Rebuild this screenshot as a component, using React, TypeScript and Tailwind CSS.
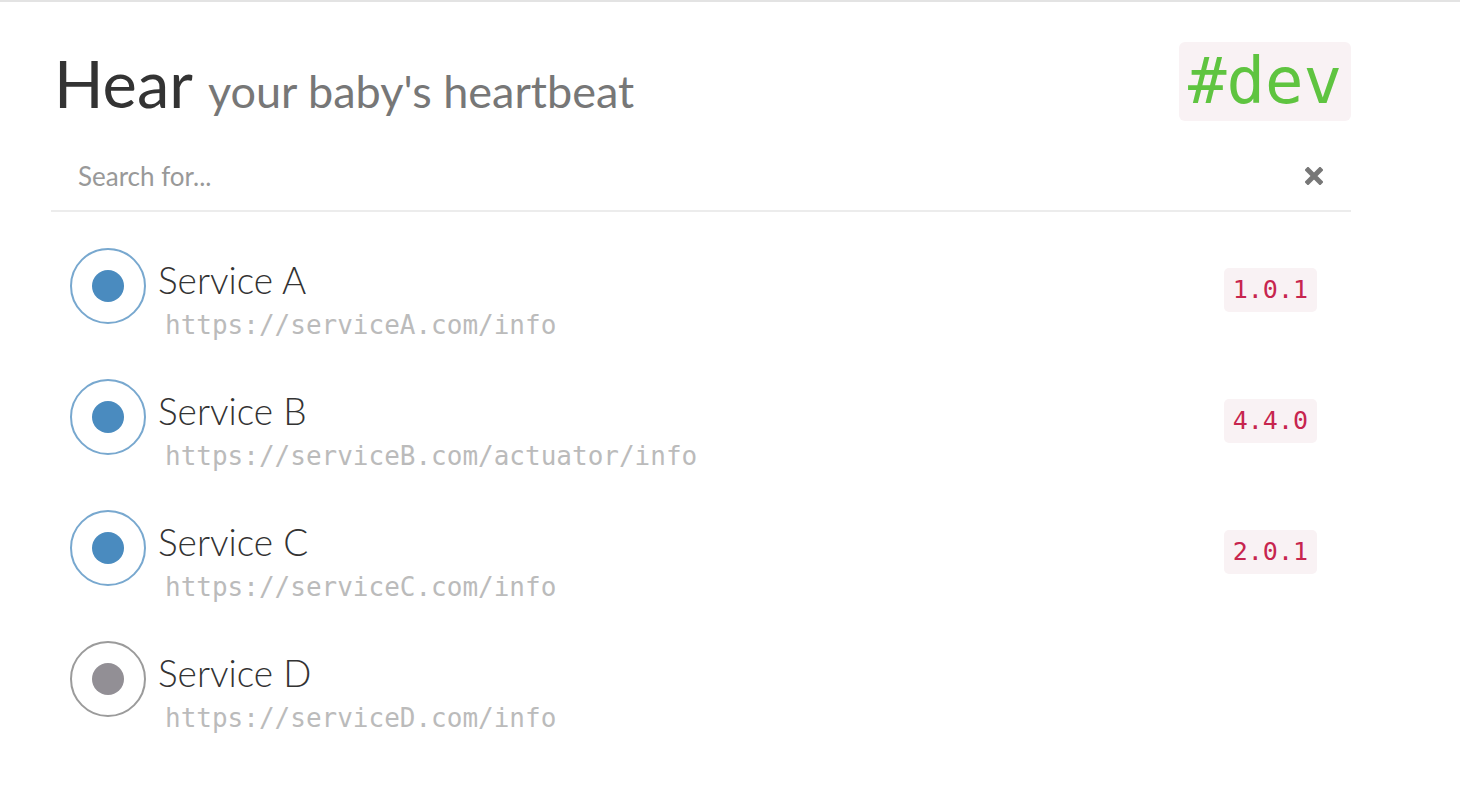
import React from "react"

const services = [
  { name: "Service A", url: "https://serviceA.com/info", version: "1.0.1", up: true },
  { name: "Service B", url: "https://serviceB.com/actuator/info", version: "4.4.0", up: true },
  { name: "Service C", url: "https://serviceC.com/info", version: "2.0.1", up: true },
  { name: "Service D", url: "https://serviceD.com/info", version: null, up: false },
]

const sans = "font-['Lato','Open_Sans',sans-serif]"
const mono = "font-['DejaVu_Sans_Mono','Liberation_Mono',monospace]"

function StatusDot({ up }: { up: boolean }) {
  return (
    <div
      className={
        up
          ? "mt-[27px] flex h-[76px] w-[76px] shrink-0 items-center justify-center rounded-full border-2 border-[#78a8cf]"
          : "mt-[27px] flex h-[76px] w-[76px] shrink-0 items-center justify-center rounded-full border-2 border-[#9b9b9b]"
      }
    >
      <div className={up ? "h-[32px] w-[32px] rounded-full bg-[#4a8bbf]" : "h-[32px] w-[32px] rounded-full bg-[#928f95]"} />
    </div>
  )
}

export default function App() {
  return (
    <div className={`min-h-screen border-t-2 border-[#e3e3e3] bg-white ${sans}`}>
      <div className="ml-[51px] w-[1300px]">
        {/* Header */}
        <div className="mt-[40px] flex items-start justify-between">
          <h1 className="flex items-baseline pt-[2px] leading-[79px]">
            <span className="pl-[3px] text-[65px] font-normal text-[#333]">Hear</span>
            <span className="ml-[15px] text-[45px] font-normal text-[#777]">your baby's heartbeat</span>
          </h1>
          <div className={`rounded-[6px] bg-[#f9f2f4] px-[9px] text-[64px] leading-[79px] text-[#5fc440] ${mono}`}>
            #dev
          </div>
        </div>

        {/* Search */}
        <div className="mt-[14px] flex h-[67px] items-center border-b-2 border-[#ececec] pb-[4px] pl-[27px] pr-[28px]">
          <input
            placeholder="Search for..."
            className="h-full flex-1 bg-transparent text-[26px] text-[#555] outline-none placeholder:text-[#999]"
          />
          <svg width="18" height="18" viewBox="0 0 18 18" className="shrink-0">
            <path d="M3 3 L15 15 M15 3 L3 15" stroke="#777" strokeWidth="5" strokeLinecap="square" />
          </svg>
        </div>

        {/* Services */}
        <div className="pt-[9px]">
          {services.map((s) => (
            <div key={s.name} className="flex h-[131px] items-start pl-[19px] pr-[34px]">
              <StatusDot up={s.up} />
              <div className="ml-[12px] mt-[39px] flex-1">
                <div className="text-[37px] font-light leading-[40px] text-[#333]">{s.name}</div>
                <div className={`mt-[10px] pl-[7px] text-[26px] leading-[30px] text-[#bbb] ${mono}`}>{s.url}</div>
              </div>
              {s.version && (
                <div className={`mt-[47px] rounded-[5px] bg-[#f9f2f4] px-[9px] py-[7px] text-[25px] leading-[30px] text-[#c7254e] ${mono}`}>
                  {s.version}
                </div>
              )}
            </div>
          ))}
        </div>
      </div>
    </div>
  )
}
